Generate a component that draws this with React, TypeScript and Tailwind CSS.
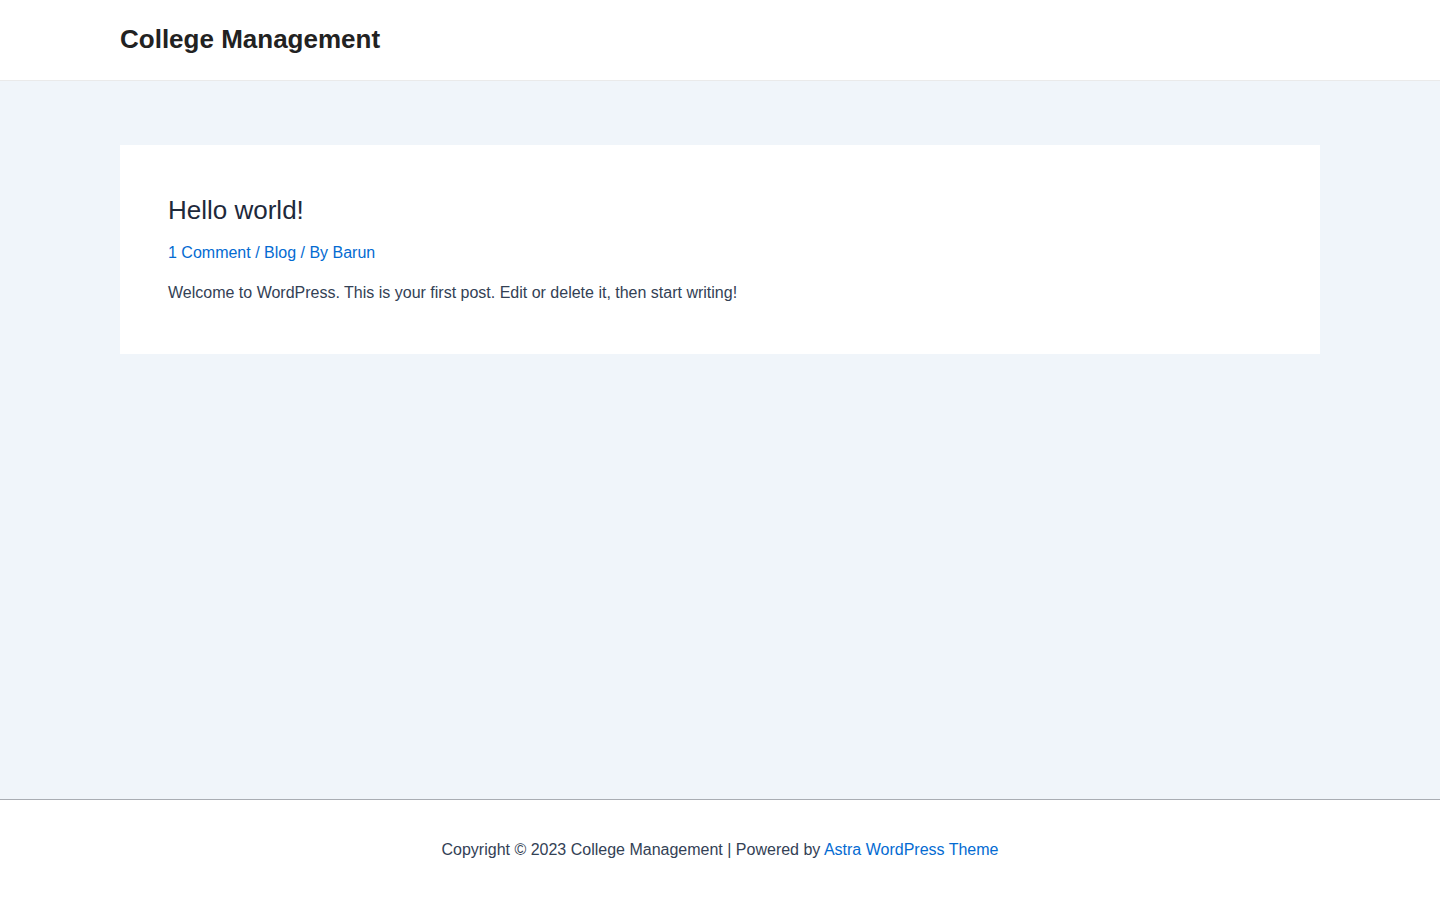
import React from "react";

export default function App() {
  return (
    <div className="min-h-screen flex flex-col bg-[#f0f5fa]" style={{ fontFamily: '"Liberation Sans", Arial, sans-serif' }}>
      <header className="h-[81px] bg-white border-b border-[#eaeaea] flex items-center px-[120px]">
        <a className="text-[26px] font-bold text-[#222222] leading-[1.2] -mt-px">College Management</a>
      </header>
      <main className="flex-1 pt-[64px] px-[120px]">
        <article className="bg-white pt-[50px] pb-[49px] px-[48px]">
          <h2 className="text-[26px] leading-[1.2] text-[#1e293b]">Hello world!</h2>
          <div className="mt-[15px] text-[16px] leading-[24px] text-[#046bd2]">
            <a>1 Comment</a> / <a>Blog</a> / By <a>Barun</a>
          </div>
          <p className="mt-[16px] text-[16px] leading-[24px] text-[#334155]">
            Welcome to WordPress. This is your first post. Edit or delete it, then start writing!
          </p>
        </article>
      </main>
      <footer className="h-[101px] bg-white border-t border-[#a9adb3] flex items-center justify-center">
        <p className="text-[16px] leading-[24px] text-[#334155]">
          Copyright © 2023 College Management | Powered by <a className="text-[#046bd2]">Astra WordPress Theme</a>
        </p>
      </footer>
    </div>
  );
}
